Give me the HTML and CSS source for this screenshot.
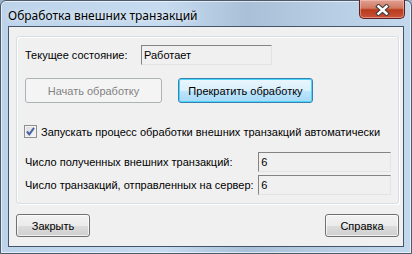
FILE: index.html
```html
<!DOCTYPE html>
<html lang="ru">
<head>
    <meta charset="UTF-8">
    <title>Обработка внешних транзакций</title>
    <link rel="stylesheet" href="styles.css">
</head>
<body>

    <div class="window">
        <!-- Title bar -->
        <div class="titlebar">
            <span class="title">Обработка внешних транзакций</span>
            <button class="close" title="Закрыть">
                <svg width="15" height="12" viewBox="0 0 15 12">
                    <path d="M3.5 2.5 L11.5 9.5 M11.5 2.5 L3.5 9.5" stroke="#3b3b3b" stroke-width="4.5" stroke-linecap="square"/>
                    <path d="M3.5 2.5 L11.5 9.5 M11.5 2.5 L3.5 9.5" stroke="#ffffff" stroke-width="2.5" stroke-linecap="square"/>
                </svg>
            </button>
        </div>

        <!-- Client area -->
        <div class="client">
            <div class="group">
                <div class="row state-row">
                    <span class="label state-label">Текущее состояние:</span>
                    <div class="field state-field">Работает</div>
                </div>

                <div class="row button-row">
                    <button class="btn start" disabled>Начать обработку</button>
                    <button class="btn stop default">Прекратить обработку</button>
                </div>

                <label class="check">
                    <span class="box">
                        <svg width="11" height="11" viewBox="0 0 11 11">
                            <path d="M2 5.5 L4.3 8.3 L9 1.8" fill="none" stroke="#4a62a8" stroke-width="2"/>
                        </svg>
                    </span>
                    Запускать процесс обработки внешних транзакций автоматически
                </label>

                <div class="row count-row first">
                    <span class="label count-label">Число полученных внешних транзакций:</span>
                    <div class="field count-field">6</div>
                </div>
                <div class="row count-row">
                    <span class="label count-label">Число транзакций, отправленных на сервер:</span>
                    <div class="field count-field">6</div>
                </div>
            </div>

            <div class="footer">
                <button class="btn small">Закрыть</button>
                <button class="btn small">Справка</button>
            </div>
        </div>
    </div>

</body>
</html>
```

FILE: styles.css
```css
/* Basic Reset */
* {
    margin: 0;
    padding: 0;
    box-sizing: border-box;
}

body {
    width: 412px;
    height: 254px;
    background: #9fb3c8;
    font-family: 'Liberation Sans', Arial, sans-serif;
    font-size: 11px;
    color: #000;
    overflow: hidden;
}

/* Window frame */
.window {
    width: 412px;
    height: 254px;
    padding: 0 7px 6px 7px;
    border: 1px solid #4d5a6b;
    border-radius: 6px 6px 0 0;
    background: linear-gradient(90deg, #bcd3ea 0%, #c6dbef 40%, #a9c0d8 60%, #b7cde3 80%, #c3d8ec 100%);
    box-shadow: inset 0 0 0 1px rgba(255, 255, 255, 0.6);
    display: flex;
    flex-direction: column;
}

.titlebar {
    height: 28px;
    display: flex;
    justify-content: space-between;
    align-items: flex-start;
}

.title {
    font-family: 'Noto Sans', sans-serif;
    font-size: 12px;
    color: #000;
    padding-top: 6px;
    text-shadow: 0 0 6px rgba(255, 255, 255, 0.9);
}

.close {
    width: 46px;
    height: 19px;
    margin-top: -1px;
    margin-right: -1px;
    border: 1px solid #5b2121;
    border-top: none;
    border-radius: 0 0 5px 5px;
    background: linear-gradient(180deg, #e0a195 0%, #d0785f 45%, #b83a1c 55%, #c9533a 100%);
    box-shadow: inset 0 0 0 1px rgba(255, 200, 190, 0.5);
    display: flex;
    justify-content: center;
    align-items: center;
    padding-top: 2px;
}

/* Client area */
.client {
    flex: 1;
    background: #f0f0f0;
    border: 1px solid #44546a;
    padding: 9px 4px 9px 7px;
    display: flex;
    flex-direction: column;
}

.group {
    border: 1px solid #d5dfe5;
    border-radius: 3px;
    box-shadow: 1px 1px 0 #fff, inset 1px 1px 0 #fff;
    padding: 8px 7px 8px 8px;
}

.row {
    display: flex;
    align-items: center;
}

.field {
    height: 20px;
    background: #f0f0f0;
    border: 1px solid;
    border-color: #838383 #e3e3e3 #e3e3e3 #838383;
    padding: 2px 2px;
    line-height: 14px;
}

.state-label {
    width: 116px;
}

.state-field {
    width: 131px;
}

.button-row {
    margin-top: 13px;
    gap: 16px;
}

/* Buttons */
.btn {
    font-family: 'Liberation Sans', Arial, sans-serif;
    font-size: 11px;
    color: #000;
    height: 25px;
    border: 1px solid #707070;
    border-radius: 3px;
    background: linear-gradient(180deg, #f2f2f2 0%, #ebebeb 50%, #dddddd 51%, #cfcfcf 100%);
    box-shadow: inset 0 0 0 1px rgba(255, 255, 255, 0.7);
}

.start {
    width: 137px;
}

.btn:disabled {
    color: #838383;
    border-color: #adb2b5;
    background: #f4f4f4;
    box-shadow: none;
}

.default {
    width: 135px;
    border-color: #3c7fb1;
    background: linear-gradient(180deg, #eaf6fd 0%, #d9f0fc 50%, #bee6fd 51%, #a7d9f5 100%);
    box-shadow: inset 0 0 0 1px #48d7fb;
}

.check {
    display: flex;
    align-items: center;
    gap: 4px;
    margin-top: 22px;
    margin-left: -1px;
}

.box {
    width: 13px;
    height: 13px;
    border: 1px solid #8e8f8f;
    background: linear-gradient(135deg, #dcdcdc, #f6f6f6);
    box-shadow: inset 0 0 0 1px #f4f4f4;
    display: flex;
    justify-content: center;
    align-items: center;
}

.count-row {
    margin-top: 3px;
}

.count-row.first {
    margin-top: 14px;
}

.count-label {
    width: 234px;
}

.count-field {
    width: 133px;
}

.footer {
    margin-top: 10px;
    display: flex;
    justify-content: space-between;
}

.small {
    width: 74px;
    height: 23px;
}
```
